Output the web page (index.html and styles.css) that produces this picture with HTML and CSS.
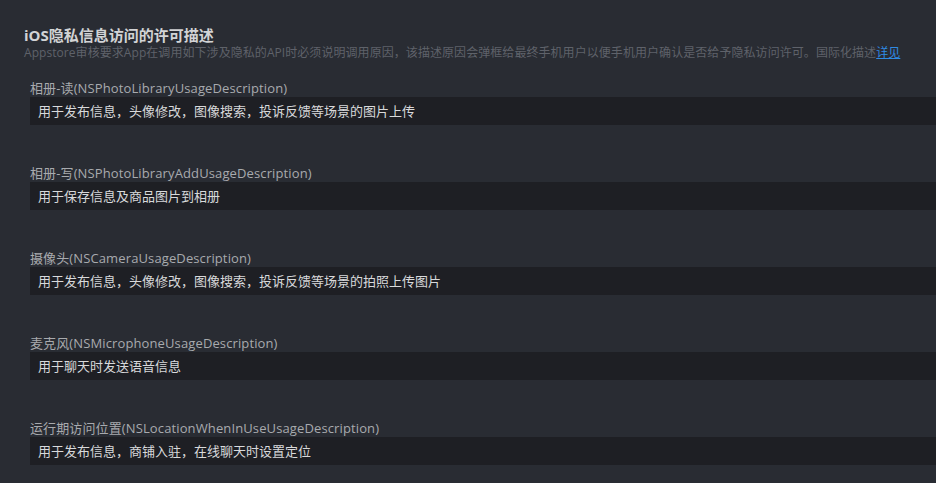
FILE: index.html
```html
<!DOCTYPE html>
<html lang="zh-CN">
<head>
<meta charset="utf-8">
<title>iOS隐私信息访问的许可描述</title>
<link rel="stylesheet" href="styles.css">
</head>
<body>
<div class="page">
  <h1 class="title">iOS隐私信息访问的许可描述</h1>
  <p class="desc">Appstore审核要求App在调用如下涉及隐私的API时必须说明调用原因，该描述原因会弹框给最终手机用户以便手机用户确认是否给予隐私访问许可。国际化描述<a class="link" href="#">详见</a></p>
  <div class="list">
    <div class="item">
      <label class="label">相册-读(NSPhotoLibraryUsageDescription)</label>
      <div class="field">用于发布信息，头像修改，图像搜索，投诉反馈等场景的图片上传</div>
    </div>
    <div class="item">
      <label class="label">相册-写(NSPhotoLibraryAddUsageDescription)</label>
      <div class="field">用于保存信息及商品图片到相册</div>
    </div>
    <div class="item">
      <label class="label">摄像头(NSCameraUsageDescription)</label>
      <div class="field">用于发布信息，头像修改，图像搜索，投诉反馈等场景的拍照上传图片</div>
    </div>
    <div class="item">
      <label class="label">麦克风(NSMicrophoneUsageDescription)</label>
      <div class="field">用于聊天时发送语音信息</div>
    </div>
    <div class="item">
      <label class="label">运行期访问位置(NSLocationWhenInUseUsageDescription)</label>
      <div class="field">用于发布信息，商铺入驻，在线聊天时设置定位</div>
    </div>
  </div>
</div>
</body>
</html>
```

FILE: styles.css
```css
html, body {
  margin: 0;
  padding: 0;
  background: #292c33;
  height: 100%;
  overflow: hidden;
}
body {
  font-family: "Open Sans", "Noto Sans CJK SC", sans-serif;
  color: #d0d0d0;
}
.page {
  padding: 26px 0 0 24px;
}
.title {
  margin: 0;
  font-size: 15px;
  font-weight: 700;
  line-height: 18px;
  color: #d2d3d5;
}
.desc {
  margin: 0;
  font-size: 12px;
  line-height: 18px;
  letter-spacing: 0.06px;
  color: #5f626a;
  white-space: nowrap;
}
.link {
  color: #2f8be4;
  text-decoration: underline;
}
.list {
  display: flex;
  flex-direction: column;
  gap: 40px;
  padding: 18px 0 0 6px;
}
.item {
  display: flex;
  flex-direction: column;
}
.label {
  display: block;
  font-size: 13px;
  line-height: 17px;
  letter-spacing: 0.12px;
  color: #a8aaae;
  white-space: nowrap;
}
.field {
  height: 28px;
  line-height: 28px;
  background: #1e1f24;
  padding-left: 8px;
  font-size: 13px;
  color: #d8d9db;
  white-space: nowrap;
}
```
